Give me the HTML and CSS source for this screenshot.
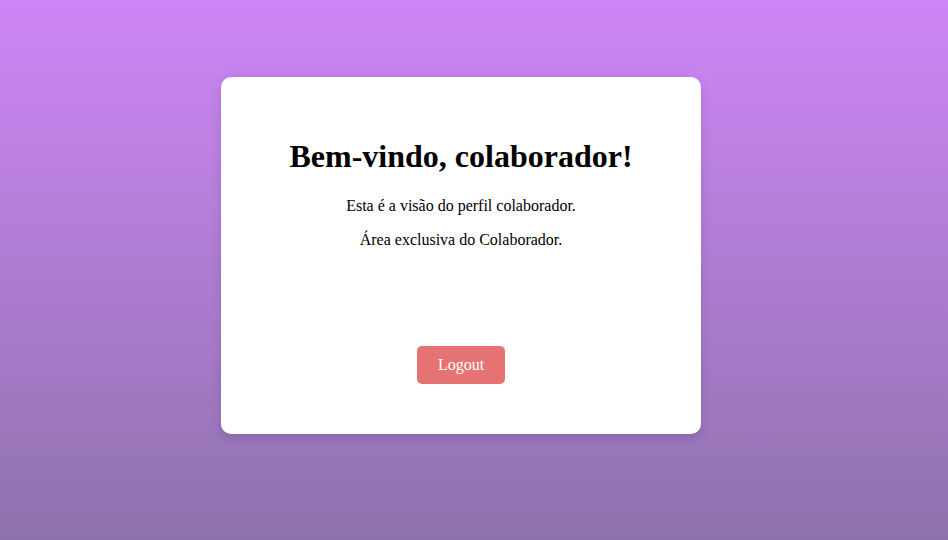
FILE: index.html
```html
<!DOCTYPE html>
<html lang="pt">
<head>
<meta charset="utf-8">
<title>Colaborador</title>
<link rel="stylesheet" href="styles.css">
</head>
<body>
<main class="page">
  <section class="card">
    <h1 class="title">Bem-vindo, colaborador!</h1>
    <p class="text">Esta é a visão do perfil colaborador.</p>
    <p class="text">Área exclusiva do Colaborador.</p>
    <button class="logout" type="button">Logout</button>
  </section>
</main>
</body>
</html>
```
FILE: styles.css
```css
html, body {
  margin: 0;
  padding: 0;
  height: 100%;
}
body {
  background: linear-gradient(to bottom, #ce86f7 0%, #8f72ad 100%);
  font-family: "Liberation Serif", "Times New Roman", serif;
  color: #000;
}
.page {
  display: flex;
  justify-content: center;
  align-items: flex-start;
  padding: 77px 26px 0 0;
  box-sizing: border-box;
  height: 100%;
}
.card {
  width: 480px;
  box-sizing: border-box;
  padding: 40px 40px 40px;
  background: #fff;
  border-radius: 10px;
  box-shadow: 0 4px 12px rgba(0, 0, 0, 0.12);
  text-align: center;
}
.title {
  font-size: 32px;
  font-weight: bold;
  margin: 21px 0 22px;
}
.text {
  font-size: 16px;
  margin: 16px 0;
}
.logout {
  display: inline-block;
  margin: 81px 0 10px;
  padding: 10px 20.5px;
  font-family: "Liberation Serif", "Times New Roman", serif;
  font-size: 16px;
  color: #fff;
  background: #e57373;
  border: none;
  border-radius: 5px;
  cursor: pointer;
}
```
